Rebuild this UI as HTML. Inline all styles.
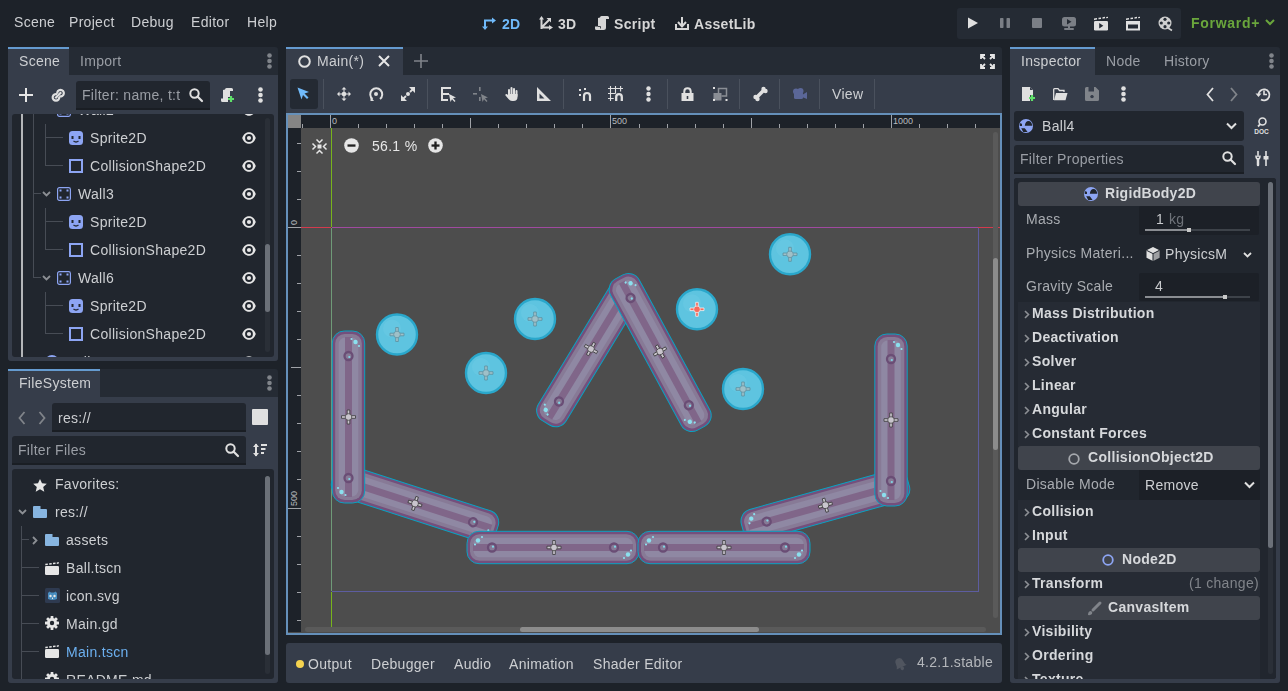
<!DOCTYPE html>
<html><head><meta charset="utf-8">
<style>
body{-webkit-font-smoothing:antialiased}
*{margin:0;padding:0;box-sizing:border-box}
html,body{width:1288px;height:691px;overflow:hidden;background:#1d2229;font-family:"Liberation Sans",sans-serif;}
.a{position:absolute}
.t{position:absolute;white-space:nowrap;font-size:14px;line-height:14px;color:#cdcfd2;letter-spacing:0.3px;will-change:transform}
.b{font-weight:bold}
.dim{color:#9a9ea5}
svg{position:absolute;overflow:visible}
</style></head><body>
<!-- MENU BAR -->
<div class="t" style="left:14px;top:15px">Scene</div>
<div class="t" style="left:69px;top:15px">Project</div>
<div class="t" style="left:131px;top:15px">Debug</div>
<div class="t" style="left:191px;top:15px">Editor</div>
<div class="t" style="left:247px;top:15px">Help</div>

<!-- play panel -->
<div class="a" style="left:957px;top:8px;width:224px;height:31px;background:#252b34;border-radius:3px"></div>


<!-- TOP CENTER BUTTONS -->
<svg style="left:482px;top:16px" width="14" height="14" viewBox="0 0 14 14"><path d="M3 13V4.5H11" fill="none" stroke="#70bafa" stroke-width="2"/><path d="M0 10.5L3 14L6 10.5Z M10 1.5L14 4.5L10 7.5Z" fill="#70bafa"/></svg>
<div class="t b" style="left:502px;top:17px;color:#70bafa">2D</div>
<svg style="left:539px;top:16px" width="14" height="14" viewBox="0 0 14 14"><path d="M2.5 13V2.5 M2.5 11.5H12 M3 11L11 3" fill="none" stroke="#d6d6d6" stroke-width="2"/><path d="M0 3.5L2.5 0L5 3.5Z M10 9L14 11.5L10 14Z M7.5 2H12V6.5Z" fill="#d6d6d6"/></svg>
<div class="t b" style="left:558px;top:17px;color:#d6d6d6">3D</div>
<svg style="left:595px;top:16px" width="14" height="14" viewBox="0 0 14 14"><path d="M5 1.5Q5 0 6.5 0H12.5Q14 0 14 1.5V3H11V11.5Q11 14 8.5 14H1.5Q0 14 0 12.5V10.5H3V2Z" fill="#d6d6d6"/><path d="M3 10.5H5.5V12.5" fill="none" stroke="#1d2229" stroke-width=".8"/></svg>
<div class="t b" style="left:614px;top:17px;color:#d6d6d6">Script</div>
<svg style="left:675px;top:16px" width="14" height="14" viewBox="0 0 14 14"><path d="M1 8V13H13V8" fill="none" stroke="#d6d6d6" stroke-width="2"/><path d="M7 1V9" stroke="#d6d6d6" stroke-width="2"/><path d="M3 6L7 10.5L11 6" fill="none" stroke="#d6d6d6" stroke-width="2"/></svg>
<div class="t b" style="left:694px;top:17px;color:#d6d6d6">AssetLib</div>

<!-- PLAY BUTTONS -->
<svg style="left:967px;top:17px" width="12" height="12" viewBox="0 0 12 12"><path d="M1 0.5L11 6L1 11.5Z" fill="#e0e0e0"/></svg>
<svg style="left:1000px;top:18px" width="10" height="10" viewBox="0 0 10 10"><rect x="0" y="0" width="3.5" height="10" rx=".7" fill="#7b7f86"/><rect x="6.5" y="0" width="3.5" height="10" rx=".7" fill="#7b7f86"/></svg>
<svg style="left:1032px;top:18px" width="10" height="10" viewBox="0 0 10 10"><rect x="0" y="0" width="10" height="10" rx="1" fill="#7b7f86"/></svg>
<svg style="left:1062px;top:17px" width="14" height="13" viewBox="0 0 14 13"><rect x="0" y="0" width="14" height="9.5" rx="2.5" fill="#7b7f86"/><path d="M5 2L9.5 4.8L5 7.5Z" fill="#252b34"/><rect x="6" y="9" width="2" height="2" fill="#7b7f86"/><rect x="2" y="11" width="10" height="2" rx="1" fill="#7b7f86"/></svg>
<svg style="left:1094px;top:17px" width="14" height="14" viewBox="0 0 14 14"><path d="M0 1.5L3 1 3 2.5 0 3Z M4.5 0.8L7 0.4 7 1.9 4.5 2.3Z M8.5 0.2L11 -0.2 11 1.3 8.5 1.7Z M12.2 0 L14 -0.2 14 1.1 12.2 1.3Z" fill="#e0e0e0"/><rect x="0" y="4" width="14" height="9.5" rx="1.3" fill="#e0e0e0"/><path d="M5.2 6L9.3 8.7L5.2 11.4Z" fill="#252b34"/></svg>
<svg style="left:1126px;top:17px" width="14" height="14" viewBox="0 0 14 14"><path d="M0 1.5L3 1 3 2.5 0 3Z M4.5 0.8L7 0.4 7 1.9 4.5 2.3Z M8.5 0.2L11 -0.2 11 1.3 8.5 1.7Z M12.2 0 L14 -0.2 14 1.1 12.2 1.3Z" fill="#e0e0e0"/><path d="M0 4H14V13.5H0Z M2 7.5V11.5H12V7.5Z" fill="#e0e0e0" fill-rule="evenodd"/></svg>
<svg style="left:1158px;top:16px" width="15" height="15" viewBox="0 0 15 15"><circle cx="7" cy="7" r="6.5" fill="#cfcfcf"/><circle cx="7" cy="3.3" r="1.6" fill="#252b34"/><circle cx="3.3" cy="7" r="1.6" fill="#252b34"/><circle cx="10.7" cy="7" r="1.6" fill="#252b34"/><circle cx="7" cy="10.7" r="1.6" fill="#252b34"/><path d="M10 12L14 14.5" stroke="#cfcfcf" stroke-width="1.6"/></svg>
<div class="t b" style="left:1191px;top:16px;color:#6aa63c;letter-spacing:0.7px">Forward+</div>
<svg style="left:1265px;top:19px" width="10" height="7" viewBox="0 0 10 7"><path d="M1 1L5 5L9 1" fill="none" stroke="#6aa63c" stroke-width="2"/></svg>

<!-- LEFT DOCK: SCENE -->
<div class="a" style="left:8px;top:47px;width:270px;height:314px;background:#252b34;border-radius:3px 3px 3px 3px"></div>
<div class="a" style="left:8px;top:75px;width:270px;height:286px;background:#363d4a;border-radius:0 0 3px 3px"></div>
<div class="a" style="left:8px;top:47px;width:61px;height:28px;background:#363d4a;border-top:2px solid #659bd0"></div>
<div class="a" style="left:12px;top:114px;width:262px;height:243px;background:#21262e;border-radius:3px"></div>

<div class="t" style="left:19px;top:54px">Scene</div>
<div class="t dim" style="left:80px;top:54px">Import</div>
<svg style="left:267px;top:53px" width="5" height="16" viewBox="0 0 5 16"><circle cx="2.5" cy="2.5" r="2.3" fill="#80848a"/><circle cx="2.5" cy="8" r="2.3" fill="#80848a"/><circle cx="2.5" cy="13.5" r="2.3" fill="#80848a"/></svg>
<svg style="left:19px;top:88px" width="14" height="14" viewBox="0 0 14 14"><path d="M7 0V14M0 7H14" stroke="#e6e6e6" stroke-width="2"/></svg>
<svg style="left:51px;top:88px" width="15" height="15" viewBox="0 0 15 15"><g fill="none" stroke="#e0e0e0" stroke-width="2.2"><path d="M6.2 6.3A3.3 3.3 0 1 0 8.2 8.7"/><path d="M8.3 8.2A3.3 3.3 0 1 0 6.3 5.8"/><path d="M4.3 10.2L10.2 4.3"/></g></svg>
<div class="a" style="left:76px;top:81px;width:134px;height:29px;background:#21262e;border-bottom:2px solid #1a1e24;border-radius:3px 3px 0 0"></div>
<div class="t dim" style="left:82px;top:88px">Filter: name, t:t</div>
<svg style="left:189px;top:88px" width="14" height="14" viewBox="0 0 14 14"><circle cx="5.5" cy="5.5" r="4.2" fill="none" stroke="#e0e0e0" stroke-width="2"/><path d="M8.5 8.5L13 13" stroke="#e0e0e0" stroke-width="2.2" stroke-linecap="round"/></svg>
<svg style="left:221px;top:88px" width="15" height="15" viewBox="0 0 15 15"><path d="M4 1.5Q4 0 5.5 0H10.5Q12 0 12 1.5V3H9V9H7V14H1.5Q0 14 0 12.5V10.5H2V2Z" fill="#e0e0e0"/><path d="M10 8V14M7 11H13" stroke="#5fe06a" stroke-width="2.2"/></svg>
<svg style="left:258px;top:87px" width="5" height="16" viewBox="0 0 5 16"><circle cx="2.5" cy="2.5" r="2.3" fill="#e0e0e0"/><circle cx="2.5" cy="8" r="2.3" fill="#e0e0e0"/><circle cx="2.5" cy="13.5" r="2.3" fill="#e0e0e0"/></svg>
<div class="a" style="left:21px;top:114px;width:2px;height:243px;background:#b4b6b9"></div>
<div class="a" style="left:33px;top:114px;width:1px;height:164px;background:#474c55"></div>
<div class="a" style="left:45px;top:124px;width:1px;height:42px;background:#474c55"></div>
<div class="a" style="left:45px;top:208px;width:1px;height:42px;background:#474c55"></div>
<div class="a" style="left:45px;top:292px;width:1px;height:42px;background:#474c55"></div>
<div class="a" style="left:45px;top:137px;width:18px;height:1px;background:#474c55"></div>
<div class="a" style="left:45px;top:165px;width:18px;height:1px;background:#474c55"></div>
<div class="a" style="left:45px;top:221px;width:18px;height:1px;background:#474c55"></div>
<div class="a" style="left:45px;top:249px;width:18px;height:1px;background:#474c55"></div>
<div class="a" style="left:45px;top:305px;width:18px;height:1px;background:#474c55"></div>
<div class="a" style="left:45px;top:333px;width:18px;height:1px;background:#474c55"></div>
<div class="a" style="left:33px;top:193px;width:8px;height:1px;background:#474c55"></div>
<div class="a" style="left:33px;top:277px;width:8px;height:1px;background:#474c55"></div>
<div class="a" style="left:12px;top:114px;width:262px;height:243px;overflow:hidden"><div class="a" style="left:-12px;top:-114px;width:300px;height:400px"><svg style="left:42px;top:107px" width="9" height="6" viewBox="0 0 9 6"><path d="M1 1L4.5 4.5L8 1" fill="none" stroke="#8c8f94" stroke-width="1.8"/></svg><svg style="left:57px;top:103px" width="14" height="14" viewBox="0 0 14 14"><rect x="0.6" y="0.6" width="12.8" height="12.8" rx="1.8" fill="none" stroke="#8da5f3" stroke-width="1.2"/><rect x="2.5" y="2.5" width="2" height="2" fill="#8da5f3"/><rect x="9.5" y="2.5" width="2" height="2" fill="#8da5f3"/><rect x="2.5" y="9.5" width="2" height="2" fill="#8da5f3"/><rect x="9.5" y="9.5" width="2" height="2" fill="#8da5f3"/></svg><div class="t" style="left:78px;top:103px">Wall2</div><svg style="left:242px;top:104px" width="14" height="12" viewBox="0 0 14 12"><path d="M0.2 6C1.8 1.8 4.3 0.2 7 0.2C9.7 0.2 12.2 1.8 13.8 6C12.2 10.2 9.7 11.8 7 11.8C4.3 11.8 1.8 10.2 0.2 6Z" fill="#e6e6e6"/><circle cx="7" cy="6" r="3.9" fill="#21262e"/><circle cx="7" cy="6" r="2.1" fill="#e6e6e6"/></svg><svg style="left:69px;top:131px" width="14" height="14" viewBox="0 0 14 14"><rect x="0" y="0" width="14" height="14" rx="3.5" fill="#8da5f3"/><rect x="2.5" y="5" width="2" height="3" fill="#21262e"/><rect x="9.5" y="5" width="2" height="3" fill="#21262e"/><path d="M4.5 10Q7 12 9.5 10" fill="none" stroke="#21262e" stroke-width="1.3"/></svg><div class="t" style="left:90px;top:131px">Sprite2D</div><svg style="left:242px;top:132px" width="14" height="12" viewBox="0 0 14 12"><path d="M0.2 6C1.8 1.8 4.3 0.2 7 0.2C9.7 0.2 12.2 1.8 13.8 6C12.2 10.2 9.7 11.8 7 11.8C4.3 11.8 1.8 10.2 0.2 6Z" fill="#e6e6e6"/><circle cx="7" cy="6" r="3.9" fill="#21262e"/><circle cx="7" cy="6" r="2.1" fill="#e6e6e6"/></svg><svg style="left:69px;top:159px" width="14" height="14" viewBox="0 0 14 14"><rect x="1" y="1" width="12" height="12" fill="none" stroke="#8da5f3" stroke-width="2"/></svg><div class="t" style="left:90px;top:159px">CollisionShape2D</div><svg style="left:242px;top:160px" width="14" height="12" viewBox="0 0 14 12"><path d="M0.2 6C1.8 1.8 4.3 0.2 7 0.2C9.7 0.2 12.2 1.8 13.8 6C12.2 10.2 9.7 11.8 7 11.8C4.3 11.8 1.8 10.2 0.2 6Z" fill="#e6e6e6"/><circle cx="7" cy="6" r="3.9" fill="#21262e"/><circle cx="7" cy="6" r="2.1" fill="#e6e6e6"/></svg><svg style="left:42px;top:191px" width="9" height="6" viewBox="0 0 9 6"><path d="M1 1L4.5 4.5L8 1" fill="none" stroke="#8c8f94" stroke-width="1.8"/></svg><svg style="left:57px;top:187px" width="14" height="14" viewBox="0 0 14 14"><rect x="0.6" y="0.6" width="12.8" height="12.8" rx="1.8" fill="none" stroke="#8da5f3" stroke-width="1.2"/><rect x="2.5" y="2.5" width="2" height="2" fill="#8da5f3"/><rect x="9.5" y="2.5" width="2" height="2" fill="#8da5f3"/><rect x="2.5" y="9.5" width="2" height="2" fill="#8da5f3"/><rect x="9.5" y="9.5" width="2" height="2" fill="#8da5f3"/></svg><div class="t" style="left:78px;top:187px">Wall3</div><svg style="left:242px;top:188px" width="14" height="12" viewBox="0 0 14 12"><path d="M0.2 6C1.8 1.8 4.3 0.2 7 0.2C9.7 0.2 12.2 1.8 13.8 6C12.2 10.2 9.7 11.8 7 11.8C4.3 11.8 1.8 10.2 0.2 6Z" fill="#e6e6e6"/><circle cx="7" cy="6" r="3.9" fill="#21262e"/><circle cx="7" cy="6" r="2.1" fill="#e6e6e6"/></svg><svg style="left:69px;top:215px" width="14" height="14" viewBox="0 0 14 14"><rect x="0" y="0" width="14" height="14" rx="3.5" fill="#8da5f3"/><rect x="2.5" y="5" width="2" height="3" fill="#21262e"/><rect x="9.5" y="5" width="2" height="3" fill="#21262e"/><path d="M4.5 10Q7 12 9.5 10" fill="none" stroke="#21262e" stroke-width="1.3"/></svg><div class="t" style="left:90px;top:215px">Sprite2D</div><svg style="left:242px;top:216px" width="14" height="12" viewBox="0 0 14 12"><path d="M0.2 6C1.8 1.8 4.3 0.2 7 0.2C9.7 0.2 12.2 1.8 13.8 6C12.2 10.2 9.7 11.8 7 11.8C4.3 11.8 1.8 10.2 0.2 6Z" fill="#e6e6e6"/><circle cx="7" cy="6" r="3.9" fill="#21262e"/><circle cx="7" cy="6" r="2.1" fill="#e6e6e6"/></svg><svg style="left:69px;top:243px" width="14" height="14" viewBox="0 0 14 14"><rect x="1" y="1" width="12" height="12" fill="none" stroke="#8da5f3" stroke-width="2"/></svg><div class="t" style="left:90px;top:243px">CollisionShape2D</div><svg style="left:242px;top:244px" width="14" height="12" viewBox="0 0 14 12"><path d="M0.2 6C1.8 1.8 4.3 0.2 7 0.2C9.7 0.2 12.2 1.8 13.8 6C12.2 10.2 9.7 11.8 7 11.8C4.3 11.8 1.8 10.2 0.2 6Z" fill="#e6e6e6"/><circle cx="7" cy="6" r="3.9" fill="#21262e"/><circle cx="7" cy="6" r="2.1" fill="#e6e6e6"/></svg><svg style="left:42px;top:275px" width="9" height="6" viewBox="0 0 9 6"><path d="M1 1L4.5 4.5L8 1" fill="none" stroke="#8c8f94" stroke-width="1.8"/></svg><svg style="left:57px;top:271px" width="14" height="14" viewBox="0 0 14 14"><rect x="0.6" y="0.6" width="12.8" height="12.8" rx="1.8" fill="none" stroke="#8da5f3" stroke-width="1.2"/><rect x="2.5" y="2.5" width="2" height="2" fill="#8da5f3"/><rect x="9.5" y="2.5" width="2" height="2" fill="#8da5f3"/><rect x="2.5" y="9.5" width="2" height="2" fill="#8da5f3"/><rect x="9.5" y="9.5" width="2" height="2" fill="#8da5f3"/></svg><div class="t" style="left:78px;top:271px">Wall6</div><svg style="left:242px;top:272px" width="14" height="12" viewBox="0 0 14 12"><path d="M0.2 6C1.8 1.8 4.3 0.2 7 0.2C9.7 0.2 12.2 1.8 13.8 6C12.2 10.2 9.7 11.8 7 11.8C4.3 11.8 1.8 10.2 0.2 6Z" fill="#e6e6e6"/><circle cx="7" cy="6" r="3.9" fill="#21262e"/><circle cx="7" cy="6" r="2.1" fill="#e6e6e6"/></svg><svg style="left:69px;top:299px" width="14" height="14" viewBox="0 0 14 14"><rect x="0" y="0" width="14" height="14" rx="3.5" fill="#8da5f3"/><rect x="2.5" y="5" width="2" height="3" fill="#21262e"/><rect x="9.5" y="5" width="2" height="3" fill="#21262e"/><path d="M4.5 10Q7 12 9.5 10" fill="none" stroke="#21262e" stroke-width="1.3"/></svg><div class="t" style="left:90px;top:299px">Sprite2D</div><svg style="left:242px;top:300px" width="14" height="12" viewBox="0 0 14 12"><path d="M0.2 6C1.8 1.8 4.3 0.2 7 0.2C9.7 0.2 12.2 1.8 13.8 6C12.2 10.2 9.7 11.8 7 11.8C4.3 11.8 1.8 10.2 0.2 6Z" fill="#e6e6e6"/><circle cx="7" cy="6" r="3.9" fill="#21262e"/><circle cx="7" cy="6" r="2.1" fill="#e6e6e6"/></svg><svg style="left:69px;top:327px" width="14" height="14" viewBox="0 0 14 14"><rect x="1" y="1" width="12" height="12" fill="none" stroke="#8da5f3" stroke-width="2"/></svg><div class="t" style="left:90px;top:327px">CollisionShape2D</div><svg style="left:242px;top:328px" width="14" height="12" viewBox="0 0 14 12"><path d="M0.2 6C1.8 1.8 4.3 0.2 7 0.2C9.7 0.2 12.2 1.8 13.8 6C12.2 10.2 9.7 11.8 7 11.8C4.3 11.8 1.8 10.2 0.2 6Z" fill="#e6e6e6"/><circle cx="7" cy="6" r="3.9" fill="#21262e"/><circle cx="7" cy="6" r="2.1" fill="#e6e6e6"/></svg><svg style="left:45px;top:355px" width="14" height="14" viewBox="0 0 14 14"><circle cx="7" cy="7" r="7" fill="#8da5f3"/></svg><div class="t" style="left:66px;top:355px">Ball</div><svg style="left:242px;top:356px" width="14" height="12" viewBox="0 0 14 12"><path d="M0.2 6C1.8 1.8 4.3 0.2 7 0.2C9.7 0.2 12.2 1.8 13.8 6C12.2 10.2 9.7 11.8 7 11.8C4.3 11.8 1.8 10.2 0.2 6Z" fill="#e6e6e6"/><circle cx="7" cy="6" r="3.9" fill="#21262e"/><circle cx="7" cy="6" r="2.1" fill="#e6e6e6"/></svg></div></div>
<div class="a" style="left:265px;top:118px;width:5px;height:234px;background:#2a2f37;border-radius:3px"></div>
<div class="a" style="left:265px;top:244px;width:5px;height:68px;background:#6b7078;border-radius:3px"></div>
<!-- LEFT DOCK: FILESYSTEM -->
<div class="a" style="left:8px;top:369px;width:270px;height:314px;background:#252b34;border-radius:3px"></div>
<div class="a" style="left:8px;top:397px;width:270px;height:286px;background:#363d4a;border-radius:0 0 3px 3px"></div>
<div class="a" style="left:8px;top:369px;width:92px;height:28px;background:#363d4a;border-top:2px solid #659bd0"></div>
<div class="a" style="left:12px;top:469px;width:262px;height:210px;background:#21262e;border-radius:3px"></div>

<div class="t" style="left:19px;top:376px">FileSystem</div>
<svg style="left:267px;top:375px" width="5" height="16" viewBox="0 0 5 16"><circle cx="2.5" cy="2.5" r="2.3" fill="#80848a"/><circle cx="2.5" cy="8" r="2.3" fill="#80848a"/><circle cx="2.5" cy="13.5" r="2.3" fill="#80848a"/></svg>
<svg style="left:18px;top:411px" width="8" height="14" viewBox="0 0 8 14"><path d="M6.5 1L1.5 7L6.5 13" fill="none" stroke="#80848a" stroke-width="1.8"/></svg>
<svg style="left:38px;top:411px" width="8" height="14" viewBox="0 0 8 14"><path d="M1.5 1L6.5 7L1.5 13" fill="none" stroke="#80848a" stroke-width="1.8"/></svg>
<div class="a" style="left:52px;top:403px;width:194px;height:29px;background:#21262e;border-bottom:2px solid #1a1e24;border-radius:3px 3px 0 0"></div>
<div class="t" style="left:58px;top:411px">res://</div>
<div class="a" style="left:252px;top:409px;width:16px;height:16px;background:#e0e0e0;border-radius:1px"></div>
<div class="a" style="left:12px;top:436px;width:234px;height:29px;background:#21262e;border-bottom:2px solid #1a1e24;border-radius:3px 3px 0 0"></div>
<div class="t dim" style="left:18px;top:443px">Filter Files</div>
<svg style="left:225px;top:443px" width="14" height="14" viewBox="0 0 14 14"><circle cx="5.5" cy="5.5" r="4.2" fill="none" stroke="#e0e0e0" stroke-width="2"/><path d="M8.5 8.5L13 13" stroke="#e0e0e0" stroke-width="2.2" stroke-linecap="round"/></svg>
<svg style="left:253px;top:443px" width="14" height="14" viewBox="0 0 14 14"><path d="M3 1V13" stroke="#e0e0e0" stroke-width="2"/><path d="M0 4L3 0.5L6 4Z M0 10L3 13.5L6 10Z" fill="#e0e0e0"/><path d="M8 2H14M8 6H12.5M8 10H11" stroke="#e0e0e0" stroke-width="1.8"/></svg>
<div class="a" style="left:12px;top:469px;width:262px;height:210px;overflow:hidden"><div class="a" style="left:-12px;top:-469px;width:300px;height:800px"><svg style="left:33px;top:479px" width="14" height="13" viewBox="0 0 14 13"><path d="M7 0L9 4.3L13.8 4.8L10.2 8L11.3 12.8L7 10.3L2.7 12.8L3.8 8L0.2 4.8L5 4.3Z" fill="#e6e6e6"/></svg><div class="t" style="left:55px;top:477px">Favorites:</div><svg style="left:18px;top:509px" width="9" height="6" viewBox="0 0 9 6"><path d="M1 1L4.5 4.5L8 1" fill="none" stroke="#8c8f94" stroke-width="1.8"/></svg><svg style="left:33px;top:506px" width="14" height="12" viewBox="0 0 14 12"><path d="M0 1Q0 0 1 0H7.5V3H13Q14 3 14 4V11Q14 12 13 12H1Q0 12 0 11Z" fill="#87b5e0"/></svg><div class="t" style="left:55px;top:505px">res://</div><div class="a" style="left:21px;top:526px;width:1px;height:160px;background:#474c55"></div><div class="a" style="left:21px;top:539px;width:8px;height:1px;background:#474c55"></div><div class="a" style="left:21px;top:567px;width:18px;height:1px;background:#474c55"></div><div class="a" style="left:21px;top:595px;width:18px;height:1px;background:#474c55"></div><div class="a" style="left:21px;top:623px;width:18px;height:1px;background:#474c55"></div><div class="a" style="left:21px;top:651px;width:18px;height:1px;background:#474c55"></div><div class="a" style="left:21px;top:679px;width:18px;height:1px;background:#474c55"></div><svg style="left:32px;top:536px" width="6" height="9" viewBox="0 0 6 9"><path d="M1 1L4.5 4.5L1 8" fill="none" stroke="#8c8f94" stroke-width="1.8"/></svg><svg style="left:45px;top:534px" width="14" height="12" viewBox="0 0 14 12"><path d="M0 1Q0 0 1 0H7.5V3H13Q14 3 14 4V11Q14 12 13 12H1Q0 12 0 11Z" fill="#87b5e0"/></svg><div class="t" style="left:66px;top:533px">assets</div><svg style="left:45px;top:562px" width="14" height="13" viewBox="0 0 14 13"><path d="M0.3 1.8L2.8 1.5V3L0.3 3.3Z M4.2 1.3L6.7 1V2.5L4.2 2.8Z M8 0.8L10.5 0.5V2L8 2.3Z M11.8 0.4L13.8 0.1V1.6L11.8 1.9Z" fill="#e6e6e6"/><rect x="0" y="4" width="14" height="9" rx="1.2" fill="#e6e6e6"/></svg><div class="t" style="left:66px;top:561px">Ball.tscn</div><svg style="left:45px;top:588px" width="15" height="15" viewBox="0 0 15 15"><rect x="0" y="0" width="15" height="15" rx="1.5" fill="#2e3a50"/><path d="M3 5L4.5 3.5L6 4.5H9L10.5 3.5L12 5V11Q7.5 13 3 11Z" fill="#478cbf"/><circle cx="5.5" cy="8" r="1.2" fill="#e6e6e6"/><circle cx="9.5" cy="8" r="1.2" fill="#e6e6e6"/><rect x="7" y="9.5" width="1" height="1.5" fill="#e6e6e6"/></svg><div class="t" style="left:66px;top:589px">icon.svg</div><svg style="left:45px;top:616px" width="14" height="14" viewBox="0 0 14 14"><g fill="#e6e6e6"><circle cx="7" cy="7" r="5"/><rect x="5.6" y="0" width="2.8" height="14" rx=".5"/><rect x="0" y="5.6" width="14" height="2.8" rx=".5"/><rect x="5.6" y="0" width="2.8" height="14" rx=".5" transform="rotate(45 7 7)"/><rect x="5.6" y="0" width="2.8" height="14" rx=".5" transform="rotate(-45 7 7)"/></g><circle cx="7" cy="7" r="2.2" fill="#21262e"/></svg><div class="t" style="left:66px;top:617px">Main.gd</div><svg style="left:45px;top:645px" width="14" height="13" viewBox="0 0 14 13"><path d="M0.3 1.8L2.8 1.5V3L0.3 3.3Z M4.2 1.3L6.7 1V2.5L4.2 2.8Z M8 0.8L10.5 0.5V2L8 2.3Z M11.8 0.4L13.8 0.1V1.6L11.8 1.9Z" fill="#e6e6e6"/><rect x="0" y="4" width="14" height="9" rx="1.2" fill="#e6e6e6"/></svg><div class="t" style="left:66px;top:645px;color:#6cb0f0">Main.tscn</div><svg style="left:45px;top:672px" width="14" height="14" viewBox="0 0 14 14"><g fill="#e6e6e6"><circle cx="7" cy="7" r="5"/><rect x="5.6" y="0" width="2.8" height="14" rx=".5"/><rect x="0" y="5.6" width="14" height="2.8" rx=".5"/><rect x="5.6" y="0" width="2.8" height="14" rx=".5" transform="rotate(45 7 7)"/><rect x="5.6" y="0" width="2.8" height="14" rx=".5" transform="rotate(-45 7 7)"/></g><circle cx="7" cy="7" r="2.2" fill="#21262e"/></svg><div class="t" style="left:66px;top:673px">README.md</div></div></div>
<div class="a" style="left:265px;top:476px;width:5px;height:198px;background:#2a2f37;border-radius:3px"></div>
<div class="a" style="left:265px;top:476px;width:5px;height:179px;background:#6b7078;border-radius:3px"></div>
<!-- CENTER -->
<div class="a" style="left:286px;top:47px;width:716px;height:28px;background:#252b34;border-radius:3px 3px 0 0"></div>
<div class="a" style="left:286px;top:75px;width:716px;height:560px;background:#363d4a"></div>
<div class="a" style="left:286px;top:47px;width:117px;height:28px;background:#363d4a;border-top:2px solid #659bd0"></div>
<div class="a" style="left:286px;top:113px;width:716px;height:522px;border:2px solid #6590ba;background:#4c4c4c"></div>
<div class="a" style="left:286px;top:643px;width:716px;height:40px;background:#363d4a;border-radius:3px"></div>

<!-- RIGHT DOCK -->
<div class="a" style="left:1010px;top:47px;width:270px;height:636px;background:#252b34;border-radius:3px"></div>
<div class="a" style="left:1010px;top:75px;width:270px;height:608px;background:#363d4a;border-radius:0 0 3px 3px"></div>
<div class="a" style="left:1010px;top:47px;width:85px;height:28px;background:#363d4a;border-top:2px solid #659bd0"></div>
<div class="a" style="left:1014px;top:178px;width:262px;height:501px;background:#21262e;border-radius:3px"></div>

<svg style="left:298px;top:55px" width="13" height="13" viewBox="0 0 13 13"><circle cx="6.5" cy="6.5" r="5.3" fill="none" stroke="#e0e0e0" stroke-width="2"/></svg>
<div class="t" style="left:317px;top:54px">Main(*)</div>
<svg style="left:378px;top:55px" width="12" height="12" viewBox="0 0 12 12"><path d="M1 1L11 11M11 1L1 11" stroke="#e6e6e6" stroke-width="2"/></svg>
<svg style="left:414px;top:54px" width="14" height="14" viewBox="0 0 14 14"><path d="M7 0V14M0 7H14" stroke="#80848a" stroke-width="1.6"/></svg>
<svg style="left:980px;top:54px" width="15" height="15" viewBox="0 0 15 15"><g fill="none" stroke="#e6e6e6" stroke-width="1.8"><path d="M1 5V1H5M1 1L5 5"/><path d="M10 1H14V5M14 1L10 5"/><path d="M1 10V14H5M1 14L5 10"/><path d="M14 10V14H10M14 14L10 10"/></g></svg>
<div class="a" style="left:290px;top:79px;width:28px;height:30px;background:#242a33;border-radius:3px"></div>
<svg style="left:297px;top:87px" width="13" height="13" viewBox="0 0 13 13"><path d="M0.5 0.5L12 5L7.5 6.5L11.5 10.5L10 12L6 8L4.5 12.5Z" fill="#70bafa"/></svg>
<div class="a" style="left:323px;top:79px;width:1px;height:30px;background:#4a515d"></div>
<div class="a" style="left:427px;top:79px;width:1px;height:30px;background:#4a515d"></div>
<div class="a" style="left:563px;top:79px;width:1px;height:30px;background:#4a515d"></div>
<div class="a" style="left:667px;top:79px;width:1px;height:30px;background:#4a515d"></div>
<div class="a" style="left:739px;top:79px;width:1px;height:30px;background:#4a515d"></div>
<div class="a" style="left:779px;top:79px;width:1px;height:30px;background:#4a515d"></div>
<div class="a" style="left:819px;top:79px;width:1px;height:30px;background:#4a515d"></div>
<div class="a" style="left:874px;top:79px;width:1px;height:30px;background:#4a515d"></div>
<svg style="left:337px;top:87px" width="14" height="14" viewBox="0 0 14 14"><g fill="#e0e0e0"><circle cx="7" cy="7" r="2.3"/><path d="M4.5 2.5L7 0L9.5 2.5Z M4.5 11.5L7 14L9.5 11.5Z M2.5 4.5L0 7L2.5 9.5Z M11.5 4.5L14 7L11.5 9.5Z"/></g><path d="M7 2V12M2 7H12" stroke="#e0e0e0" stroke-width="1"/></svg>
<svg style="left:369px;top:87px" width="14" height="14" viewBox="0 0 14 14"><path d="M3.5 12A6 6 0 1 1 11 12" fill="none" stroke="#e0e0e0" stroke-width="2"/><circle cx="7" cy="7" r="2" fill="#e0e0e0"/><path d="M1.5 9.5L5 14H1.5Z" fill="#e0e0e0"/></svg>
<svg style="left:401px;top:87px" width="14" height="14" viewBox="0 0 14 14"><g fill="#e0e0e0"><path d="M8 0H14V6Z M0 8V14H6Z"/><circle cx="7" cy="7" r="2"/></g><path d="M2 12L5 9M9 5L12 2" stroke="#e0e0e0" stroke-width="1.8"/></svg>
<svg style="left:441px;top:87px" width="15" height="15" viewBox="0 0 15 15"><g fill="#e0e0e0"><rect x="0" y="0" width="2" height="14"/><rect x="0" y="0" width="10" height="2"/><rect x="0" y="6" width="8" height="2"/><rect x="0" y="12" width="7" height="2"/><path d="M8 7L15 10.5L12 11.3L14.5 14L13.5 15L11 12.3L9.5 15Z"/></g></svg>
<svg style="left:473px;top:87px" width="15" height="15" viewBox="0 0 15 15"><g fill="#80848a"><rect x="6" y="0" width="1.6" height="4"/><rect x="0" y="6" width="4" height="1.6"/><rect x="6" y="10" width="1.6" height="4"/><path d="M8 7L15 10.5L12 11.3L14.5 14L13.5 15L11 12.3L9.5 15Z"/></g></svg>
<svg style="left:505px;top:87px" width="14" height="14" viewBox="0 0 14 14"><g fill="#e0e0e0"><rect x="3" y="2" width="2" height="7" rx="1"/><rect x="5.5" y="0" width="2" height="8" rx="1"/><rect x="8" y="1" width="2" height="8" rx="1"/><rect x="10.5" y="3" width="2" height="7" rx="1"/><path d="M3 7H12.5V10Q12.5 14 8.5 14H7Q5 14 3.5 12L0.5 8.5Q0 7.5 1 7Q2 6.7 3 8Z"/></g></svg>
<svg style="left:537px;top:87px" width="14" height="14" viewBox="0 0 14 14"><path d="M0 0V14H14Z M2.5 6.5V11.5H7.5Z" fill="#e0e0e0" fill-rule="evenodd"/></svg>
<svg style="left:579px;top:88px" width="13" height="13" viewBox="0 0 13 13"><g fill="#e0e0e0"><rect x="0" y="1" width="2" height="2"/><rect x="5" y="0" width="2" height="2"/><rect x="0" y="6" width="2" height="2"/></g><path d="M5 13V8Q5 5 8 5Q11 5 11 8V13" fill="none" stroke="#e0e0e0" stroke-width="2.2"/></svg>
<svg style="left:608px;top:86px" width="16" height="15" viewBox="0 0 16 15"><path d="M2.5 0V15M7.5 0V7.5M12.6 0V5.6M0 2.5H15M0 7.5H7.5M0 12.5H5.7" stroke="#e0e0e0" stroke-width="1.1"/><path d="M8.2 15V11Q8.2 8.2 11 8.2Q13.8 8.2 13.8 11V15" fill="none" stroke="#e0e0e0" stroke-width="2.3"/></svg>
<svg style="left:646px;top:86px" width="5" height="16" viewBox="0 0 5 16"><circle cx="2.5" cy="2.5" r="2.2" fill="#e0e0e0"/><circle cx="2.5" cy="8" r="2.2" fill="#e0e0e0"/><circle cx="2.5" cy="13.5" r="2.2" fill="#e0e0e0"/></svg>
<svg style="left:681px;top:87px" width="13" height="14" viewBox="0 0 13 14"><path d="M3.3 6.5V4.5Q3.3 1.2 6.5 1.2Q9.7 1.2 9.7 4.5V6.5" fill="none" stroke="#e0e0e0" stroke-width="2"/><path d="M0.5 6H12.5V14H0.5Z M5.7 9V12H7.3V9Z" fill="#e0e0e0" fill-rule="evenodd"/></svg>
<svg style="left:713px;top:87px" width="15" height="14" viewBox="0 0 15 14"><rect x="0.5" y="6" width="8" height="7.5" fill="#8a8e95"/><path d="M5.5 7V1.5H13.5V9H8.5" fill="none" stroke="#8a8e95" stroke-width="1.5"/><g fill="#e0e0e0"><rect x="0" y="0" width="2" height="2"/><rect x="12.5" y="12" width="2" height="2"/><rect x="0" y="12" width="2" height="2"/></g></svg>
<svg style="left:753px;top:87px" width="15" height="14" viewBox="0 0 15 14"><path d="M4 10L11 3" stroke="#e0e0e0" stroke-width="3.5"/><g fill="#e0e0e0"><circle cx="2.5" cy="10" r="2.2"/><circle cx="4.5" cy="12" r="2.2"/><circle cx="10.5" cy="2" r="2.2"/><circle cx="12.5" cy="4" r="2.2"/></g></svg>
<svg style="left:793px;top:88px" width="14" height="12" viewBox="0 0 14 12"><g fill="#5b6798"><circle cx="3" cy="3.5" r="3"/><circle cx="7.5" cy="3" r="3"/><rect x="1" y="4" width="9" height="7" rx="1.5"/><path d="M9 7L14 4V11L9 9Z"/></g></svg>
<div class="t" style="left:832px;top:87px">View</div>
<div class="a" style="left:288px;top:115px;width:712px;height:13px;background:#1d2229"></div>
<div class="a" style="left:288px;top:128px;width:13px;height:504px;background:#1d2229"></div>
<div class="a" style="left:288px;top:115px;width:13px;height:13px;background:#858585"></div>
<div class="a" style="left:302px;top:124px;width:1px;height:4px;background:#a0a3a8"></div>
<div class="a" style="left:330px;top:115px;width:1px;height:13px;background:#a0a3a8"></div>
<div class="a" style="left:332px;top:116px;font-size:9px;line-height:10px;color:#b8bbbf;white-space:nowrap">0</div>
<div class="a" style="left:358px;top:124px;width:1px;height:4px;background:#a0a3a8"></div>
<div class="a" style="left:386px;top:124px;width:1px;height:4px;background:#a0a3a8"></div>
<div class="a" style="left:414px;top:124px;width:1px;height:4px;background:#a0a3a8"></div>
<div class="a" style="left:442px;top:124px;width:1px;height:4px;background:#a0a3a8"></div>
<div class="a" style="left:470px;top:118px;width:1px;height:10px;background:#a0a3a8"></div>
<div class="a" style="left:498px;top:124px;width:1px;height:4px;background:#a0a3a8"></div>
<div class="a" style="left:526px;top:124px;width:1px;height:4px;background:#a0a3a8"></div>
<div class="a" style="left:554px;top:124px;width:1px;height:4px;background:#a0a3a8"></div>
<div class="a" style="left:582px;top:124px;width:1px;height:4px;background:#a0a3a8"></div>
<div class="a" style="left:610px;top:115px;width:1px;height:13px;background:#a0a3a8"></div>
<div class="a" style="left:612px;top:116px;font-size:9px;line-height:10px;color:#b8bbbf;white-space:nowrap">500</div>
<div class="a" style="left:639px;top:124px;width:1px;height:4px;background:#a0a3a8"></div>
<div class="a" style="left:667px;top:124px;width:1px;height:4px;background:#a0a3a8"></div>
<div class="a" style="left:695px;top:124px;width:1px;height:4px;background:#a0a3a8"></div>
<div class="a" style="left:723px;top:124px;width:1px;height:4px;background:#a0a3a8"></div>
<div class="a" style="left:751px;top:118px;width:1px;height:10px;background:#a0a3a8"></div>
<div class="a" style="left:779px;top:124px;width:1px;height:4px;background:#a0a3a8"></div>
<div class="a" style="left:807px;top:124px;width:1px;height:4px;background:#a0a3a8"></div>
<div class="a" style="left:835px;top:124px;width:1px;height:4px;background:#a0a3a8"></div>
<div class="a" style="left:863px;top:124px;width:1px;height:4px;background:#a0a3a8"></div>
<div class="a" style="left:891px;top:115px;width:1px;height:13px;background:#a0a3a8"></div>
<div class="a" style="left:893px;top:116px;font-size:9px;line-height:10px;color:#b8bbbf;white-space:nowrap">1000</div>
<div class="a" style="left:919px;top:124px;width:1px;height:4px;background:#a0a3a8"></div>
<div class="a" style="left:947px;top:124px;width:1px;height:4px;background:#a0a3a8"></div>
<div class="a" style="left:975px;top:124px;width:1px;height:4px;background:#a0a3a8"></div>
<div class="a" style="left:297px;top:143px;width:4px;height:1px;background:#a0a3a8"></div>
<div class="a" style="left:297px;top:171px;width:4px;height:1px;background:#a0a3a8"></div>
<div class="a" style="left:297px;top:199px;width:4px;height:1px;background:#a0a3a8"></div>
<div class="a" style="left:288px;top:227px;width:13px;height:1px;background:#a0a3a8"></div>
<div class="a" style="left:289px;top:225px;font-size:9px;line-height:10px;color:#b8bbbf;white-space:nowrap;transform:rotate(-90deg);transform-origin:0 0">0</div>
<div class="a" style="left:297px;top:255px;width:4px;height:1px;background:#a0a3a8"></div>
<div class="a" style="left:297px;top:283px;width:4px;height:1px;background:#a0a3a8"></div>
<div class="a" style="left:297px;top:311px;width:4px;height:1px;background:#a0a3a8"></div>
<div class="a" style="left:297px;top:339px;width:4px;height:1px;background:#a0a3a8"></div>
<div class="a" style="left:291px;top:367px;width:10px;height:1px;background:#a0a3a8"></div>
<div class="a" style="left:297px;top:395px;width:4px;height:1px;background:#a0a3a8"></div>
<div class="a" style="left:297px;top:423px;width:4px;height:1px;background:#a0a3a8"></div>
<div class="a" style="left:297px;top:451px;width:4px;height:1px;background:#a0a3a8"></div>
<div class="a" style="left:297px;top:479px;width:4px;height:1px;background:#a0a3a8"></div>
<div class="a" style="left:288px;top:508px;width:13px;height:1px;background:#a0a3a8"></div>
<div class="a" style="left:289px;top:506px;font-size:9px;line-height:10px;color:#b8bbbf;white-space:nowrap;transform:rotate(-90deg);transform-origin:0 0">500</div>
<div class="a" style="left:297px;top:536px;width:4px;height:1px;background:#a0a3a8"></div>
<div class="a" style="left:297px;top:564px;width:4px;height:1px;background:#a0a3a8"></div>
<div class="a" style="left:297px;top:592px;width:4px;height:1px;background:#a0a3a8"></div>
<div class="a" style="left:297px;top:620px;width:4px;height:1px;background:#a0a3a8"></div>
<svg style="left:301px;top:128px" width="699" height="504" viewBox="301 128 699 504"><rect x="301" y="128" width="699" height="504" fill="#4d4d4d"/><g shape-rendering="crispEdges"><rect x="301" y="227" width="30" height="1" fill="#d43a4e"/><rect x="332" y="227" width="646" height="1" fill="#a04aa0"/><rect x="978" y="227" width="22" height="1" fill="#d43a4e"/><rect x="331" y="128" width="1" height="99" fill="#78b41c"/><rect x="331" y="228" width="1" height="363" fill="#6f9a78"/><rect x="331" y="592" width="1" height="40" fill="#78b41c"/><rect x="978" y="228" width="1" height="363" fill="#5d5da0"/><rect x="332" y="591" width="647" height="1" fill="#5d5da0"/></g><g transform="translate(415 503.5) rotate(17.9)"><rect x="-86" y="-16.2" width="172" height="32.4" rx="12" fill="#744f7c" stroke="#0aa3c2" stroke-width="1"/><rect x="-83" y="-13.3" width="166" height="26.6" rx="9.5" fill="#877a96"/><rect x="-79.5" y="-9.8" width="159" height="19.6" rx="6.5" fill="#8f88a3"/><rect x="-80" y="-3.5" width="160" height="7" fill="#806689"/><circle cx="-61" cy="0" r="4" fill="#877a96" stroke="#6a4d75" stroke-width="2.3"/><circle cx="-60" cy="-0.8" r="1.1" fill="#7fd8e8"/><circle cx="61" cy="0" r="4" fill="#877a96" stroke="#6a4d75" stroke-width="2.3"/><circle cx="62" cy="-0.8" r="1.1" fill="#7fd8e8"/><circle cx="-75" cy="-7" r="2.2" fill="#8be0ee"/><circle cx="-71" cy="-10.5" r="1.1" fill="#8be0ee"/><circle cx="-78" cy="-3" r="1.1" fill="#8be0ee"/><circle cx="75" cy="7" r="2.2" fill="#8be0ee"/><circle cx="71" cy="10.5" r="1.1" fill="#8be0ee"/><circle cx="78" cy="3" r="1.1" fill="#8be0ee"/></g><g transform="translate(825.4 505.2) rotate(-15.6)"><rect x="-86" y="-16.2" width="172" height="32.4" rx="12" fill="#744f7c" stroke="#0aa3c2" stroke-width="1"/><rect x="-83" y="-13.3" width="166" height="26.6" rx="9.5" fill="#877a96"/><rect x="-79.5" y="-9.8" width="159" height="19.6" rx="6.5" fill="#8f88a3"/><rect x="-80" y="-3.5" width="160" height="7" fill="#806689"/><circle cx="-61" cy="0" r="4" fill="#877a96" stroke="#6a4d75" stroke-width="2.3"/><circle cx="-60" cy="-0.8" r="1.1" fill="#7fd8e8"/><circle cx="61" cy="0" r="4" fill="#877a96" stroke="#6a4d75" stroke-width="2.3"/><circle cx="62" cy="-0.8" r="1.1" fill="#7fd8e8"/><circle cx="-75" cy="-7" r="2.2" fill="#8be0ee"/><circle cx="-71" cy="-10.5" r="1.1" fill="#8be0ee"/><circle cx="-78" cy="-3" r="1.1" fill="#8be0ee"/><circle cx="75" cy="7" r="2.2" fill="#8be0ee"/><circle cx="71" cy="10.5" r="1.1" fill="#8be0ee"/><circle cx="78" cy="3" r="1.1" fill="#8be0ee"/></g><g transform="translate(348.5 417) rotate(90)"><rect x="-86" y="-16.2" width="172" height="32.4" rx="12" fill="#744f7c" stroke="#0aa3c2" stroke-width="1"/><rect x="-83" y="-13.3" width="166" height="26.6" rx="9.5" fill="#877a96"/><rect x="-79.5" y="-9.8" width="159" height="19.6" rx="6.5" fill="#8f88a3"/><rect x="-80" y="-3.5" width="160" height="7" fill="#806689"/><circle cx="-61" cy="0" r="4" fill="#877a96" stroke="#6a4d75" stroke-width="2.3"/><circle cx="-60" cy="-0.8" r="1.1" fill="#7fd8e8"/><circle cx="61" cy="0" r="4" fill="#877a96" stroke="#6a4d75" stroke-width="2.3"/><circle cx="62" cy="-0.8" r="1.1" fill="#7fd8e8"/><circle cx="-75" cy="-7" r="2.2" fill="#8be0ee"/><circle cx="-71" cy="-10.5" r="1.1" fill="#8be0ee"/><circle cx="-78" cy="-3" r="1.1" fill="#8be0ee"/><circle cx="75" cy="7" r="2.2" fill="#8be0ee"/><circle cx="71" cy="10.5" r="1.1" fill="#8be0ee"/><circle cx="78" cy="3" r="1.1" fill="#8be0ee"/></g><g transform="translate(891 420) rotate(90)"><rect x="-86" y="-16.2" width="172" height="32.4" rx="12" fill="#744f7c" stroke="#0aa3c2" stroke-width="1"/><rect x="-83" y="-13.3" width="166" height="26.6" rx="9.5" fill="#877a96"/><rect x="-79.5" y="-9.8" width="159" height="19.6" rx="6.5" fill="#8f88a3"/><rect x="-80" y="-3.5" width="160" height="7" fill="#806689"/><circle cx="-61" cy="0" r="4" fill="#877a96" stroke="#6a4d75" stroke-width="2.3"/><circle cx="-60" cy="-0.8" r="1.1" fill="#7fd8e8"/><circle cx="61" cy="0" r="4" fill="#877a96" stroke="#6a4d75" stroke-width="2.3"/><circle cx="62" cy="-0.8" r="1.1" fill="#7fd8e8"/><circle cx="-75" cy="-7" r="2.2" fill="#8be0ee"/><circle cx="-71" cy="-10.5" r="1.1" fill="#8be0ee"/><circle cx="-78" cy="-3" r="1.1" fill="#8be0ee"/><circle cx="75" cy="7" r="2.2" fill="#8be0ee"/><circle cx="71" cy="10.5" r="1.1" fill="#8be0ee"/><circle cx="78" cy="3" r="1.1" fill="#8be0ee"/></g><g transform="translate(553 547.5) rotate(0)"><rect x="-86" y="-16.2" width="172" height="32.4" rx="12" fill="#744f7c" stroke="#0aa3c2" stroke-width="1"/><rect x="-83" y="-13.3" width="166" height="26.6" rx="9.5" fill="#877a96"/><rect x="-79.5" y="-9.8" width="159" height="19.6" rx="6.5" fill="#8f88a3"/><rect x="-80" y="-3.5" width="160" height="7" fill="#806689"/><circle cx="-61" cy="0" r="4" fill="#877a96" stroke="#6a4d75" stroke-width="2.3"/><circle cx="-60" cy="-0.8" r="1.1" fill="#7fd8e8"/><circle cx="61" cy="0" r="4" fill="#877a96" stroke="#6a4d75" stroke-width="2.3"/><circle cx="62" cy="-0.8" r="1.1" fill="#7fd8e8"/><circle cx="-75" cy="-7" r="2.2" fill="#8be0ee"/><circle cx="-71" cy="-10.5" r="1.1" fill="#8be0ee"/><circle cx="-78" cy="-3" r="1.1" fill="#8be0ee"/><circle cx="75" cy="7" r="2.2" fill="#8be0ee"/><circle cx="71" cy="10.5" r="1.1" fill="#8be0ee"/><circle cx="78" cy="3" r="1.1" fill="#8be0ee"/></g><g transform="translate(724 547.5) rotate(0)"><rect x="-86" y="-16.2" width="172" height="32.4" rx="12" fill="#744f7c" stroke="#0aa3c2" stroke-width="1"/><rect x="-83" y="-13.3" width="166" height="26.6" rx="9.5" fill="#877a96"/><rect x="-79.5" y="-9.8" width="159" height="19.6" rx="6.5" fill="#8f88a3"/><rect x="-80" y="-3.5" width="160" height="7" fill="#806689"/><circle cx="-61" cy="0" r="4" fill="#877a96" stroke="#6a4d75" stroke-width="2.3"/><circle cx="-60" cy="-0.8" r="1.1" fill="#7fd8e8"/><circle cx="61" cy="0" r="4" fill="#877a96" stroke="#6a4d75" stroke-width="2.3"/><circle cx="62" cy="-0.8" r="1.1" fill="#7fd8e8"/><circle cx="-75" cy="-7" r="2.2" fill="#8be0ee"/><circle cx="-71" cy="-10.5" r="1.1" fill="#8be0ee"/><circle cx="-78" cy="-3" r="1.1" fill="#8be0ee"/><circle cx="75" cy="7" r="2.2" fill="#8be0ee"/><circle cx="71" cy="10.5" r="1.1" fill="#8be0ee"/><circle cx="78" cy="3" r="1.1" fill="#8be0ee"/></g><g transform="translate(588.6 352.8) rotate(121.3)"><rect x="-82" y="-16.2" width="164" height="32.4" rx="12" fill="#744f7c" stroke="#0aa3c2" stroke-width="1"/><rect x="-79" y="-13.3" width="158" height="26.6" rx="9.5" fill="#877a96"/><rect x="-75.5" y="-9.8" width="151" height="19.6" rx="6.5" fill="#8f88a3"/><rect x="-76" y="-3.5" width="152" height="7" fill="#806689"/><circle cx="-65" cy="0" r="4" fill="#877a96" stroke="#6a4d75" stroke-width="2.3"/><circle cx="-64" cy="-0.8" r="1.1" fill="#7fd8e8"/><circle cx="57" cy="0" r="4" fill="#877a96" stroke="#6a4d75" stroke-width="2.3"/><circle cx="58" cy="-0.8" r="1.1" fill="#7fd8e8"/><circle cx="-71" cy="-7" r="2.2" fill="#8be0ee"/><circle cx="-67" cy="-10.5" r="1.1" fill="#8be0ee"/><circle cx="-74" cy="-3" r="1.1" fill="#8be0ee"/><circle cx="71" cy="7" r="2.2" fill="#8be0ee"/><circle cx="67" cy="10.5" r="1.1" fill="#8be0ee"/><circle cx="74" cy="3" r="1.1" fill="#8be0ee"/></g><g transform="translate(660.2 352.5) rotate(61.5)"><rect x="-86" y="-16.2" width="172" height="32.4" rx="12" fill="#744f7c" stroke="#0aa3c2" stroke-width="1"/><rect x="-83" y="-13.3" width="166" height="26.6" rx="9.5" fill="#877a96"/><rect x="-79.5" y="-9.8" width="159" height="19.6" rx="6.5" fill="#8f88a3"/><rect x="-80" y="-3.5" width="160" height="7" fill="#806689"/><circle cx="-62" cy="0" r="4" fill="#877a96" stroke="#6a4d75" stroke-width="2.3"/><circle cx="-61" cy="-0.8" r="1.1" fill="#7fd8e8"/><circle cx="60" cy="0" r="4" fill="#877a96" stroke="#6a4d75" stroke-width="2.3"/><circle cx="61" cy="-0.8" r="1.1" fill="#7fd8e8"/><circle cx="-75" cy="-7" r="2.2" fill="#8be0ee"/><circle cx="-71" cy="-10.5" r="1.1" fill="#8be0ee"/><circle cx="-78" cy="-3" r="1.1" fill="#8be0ee"/><circle cx="75" cy="7" r="2.2" fill="#8be0ee"/><circle cx="71" cy="10.5" r="1.1" fill="#8be0ee"/><circle cx="78" cy="3" r="1.1" fill="#8be0ee"/></g><g transform="translate(415 503.5) rotate(17.9)"><path d="M-1.3 -7H1.3V-2.5H-1.3Z M-1.3 7H1.3V2.5H-1.3Z M-7 -1.3V1.3H-2.5V-1.3Z M7 -1.3V1.3H2.5V-1.3Z" fill="#c9c5cd" stroke="#3a3a3a" stroke-width="0.8"/><circle r="3.3" fill="#c9c5cd" stroke="#3a3a3a" stroke-width="0.7"/></g><g transform="translate(825.4 505.2) rotate(-15.6)"><path d="M-1.3 -7H1.3V-2.5H-1.3Z M-1.3 7H1.3V2.5H-1.3Z M-7 -1.3V1.3H-2.5V-1.3Z M7 -1.3V1.3H2.5V-1.3Z" fill="#c9c5cd" stroke="#3a3a3a" stroke-width="0.8"/><circle r="3.3" fill="#c9c5cd" stroke="#3a3a3a" stroke-width="0.7"/></g><g transform="translate(348.5 417) rotate(0)"><path d="M-1.3 -7H1.3V-2.5H-1.3Z M-1.3 7H1.3V2.5H-1.3Z M-7 -1.3V1.3H-2.5V-1.3Z M7 -1.3V1.3H2.5V-1.3Z" fill="#c9c5cd" stroke="#3a3a3a" stroke-width="0.8"/><circle r="3.3" fill="#c9c5cd" stroke="#3a3a3a" stroke-width="0.7"/></g><g transform="translate(891 420) rotate(0)"><path d="M-1.3 -7H1.3V-2.5H-1.3Z M-1.3 7H1.3V2.5H-1.3Z M-7 -1.3V1.3H-2.5V-1.3Z M7 -1.3V1.3H2.5V-1.3Z" fill="#c9c5cd" stroke="#3a3a3a" stroke-width="0.8"/><circle r="3.3" fill="#c9c5cd" stroke="#3a3a3a" stroke-width="0.7"/></g><g transform="translate(554 547.5) rotate(0)"><path d="M-1.3 -7H1.3V-2.5H-1.3Z M-1.3 7H1.3V2.5H-1.3Z M-7 -1.3V1.3H-2.5V-1.3Z M7 -1.3V1.3H2.5V-1.3Z" fill="#c9c5cd" stroke="#3a3a3a" stroke-width="0.8"/><circle r="3.3" fill="#c9c5cd" stroke="#3a3a3a" stroke-width="0.7"/></g><g transform="translate(724 547.5) rotate(0)"><path d="M-1.3 -7H1.3V-2.5H-1.3Z M-1.3 7H1.3V2.5H-1.3Z M-7 -1.3V1.3H-2.5V-1.3Z M7 -1.3V1.3H2.5V-1.3Z" fill="#c9c5cd" stroke="#3a3a3a" stroke-width="0.8"/><circle r="3.3" fill="#c9c5cd" stroke="#3a3a3a" stroke-width="0.7"/></g><g transform="translate(591 349) rotate(30)"><path d="M-1.3 -7H1.3V-2.5H-1.3Z M-1.3 7H1.3V2.5H-1.3Z M-7 -1.3V1.3H-2.5V-1.3Z M7 -1.3V1.3H2.5V-1.3Z" fill="#c9c5cd" stroke="#3a3a3a" stroke-width="0.8"/><circle r="3.3" fill="#c9c5cd" stroke="#3a3a3a" stroke-width="0.7"/></g><g transform="translate(660 351.5) rotate(-30)"><path d="M-1.3 -7H1.3V-2.5H-1.3Z M-1.3 7H1.3V2.5H-1.3Z M-7 -1.3V1.3H-2.5V-1.3Z M7 -1.3V1.3H2.5V-1.3Z" fill="#c9c5cd" stroke="#3a3a3a" stroke-width="0.8"/><circle r="3.3" fill="#c9c5cd" stroke="#3a3a3a" stroke-width="0.7"/></g><circle cx="397" cy="334.5" r="20" fill="#5ec4e0" stroke="#2aa7cb" stroke-width="2.4"/><circle cx="392" cy="328.5" r="9" fill="#68c9e2" opacity="0.7"/><g transform="translate(397 334.5) rotate(0)"><path d="M-1.3 -7H1.3V-2.5H-1.3Z M-1.3 7H1.3V2.5H-1.3Z M-7 -1.3V1.3H-2.5V-1.3Z M7 -1.3V1.3H2.5V-1.3Z" fill="#9fc0c8" stroke="#5b8fa0" stroke-width="0.8"/><circle r="3.3" fill="#9fc0c8" stroke="#5b8fa0" stroke-width="0.7"/></g><circle cx="486" cy="373" r="20" fill="#5ec4e0" stroke="#2aa7cb" stroke-width="2.4"/><circle cx="481" cy="367" r="9" fill="#68c9e2" opacity="0.7"/><g transform="translate(486 373) rotate(0)"><path d="M-1.3 -7H1.3V-2.5H-1.3Z M-1.3 7H1.3V2.5H-1.3Z M-7 -1.3V1.3H-2.5V-1.3Z M7 -1.3V1.3H2.5V-1.3Z" fill="#9fc0c8" stroke="#5b8fa0" stroke-width="0.8"/><circle r="3.3" fill="#9fc0c8" stroke="#5b8fa0" stroke-width="0.7"/></g><circle cx="535" cy="319" r="20" fill="#5ec4e0" stroke="#2aa7cb" stroke-width="2.4"/><circle cx="530" cy="313" r="9" fill="#68c9e2" opacity="0.7"/><g transform="translate(535 319) rotate(0)"><path d="M-1.3 -7H1.3V-2.5H-1.3Z M-1.3 7H1.3V2.5H-1.3Z M-7 -1.3V1.3H-2.5V-1.3Z M7 -1.3V1.3H2.5V-1.3Z" fill="#9fc0c8" stroke="#5b8fa0" stroke-width="0.8"/><circle r="3.3" fill="#9fc0c8" stroke="#5b8fa0" stroke-width="0.7"/></g><circle cx="743" cy="389" r="20" fill="#5ec4e0" stroke="#2aa7cb" stroke-width="2.4"/><circle cx="738" cy="383" r="9" fill="#68c9e2" opacity="0.7"/><g transform="translate(743 389) rotate(0)"><path d="M-1.3 -7H1.3V-2.5H-1.3Z M-1.3 7H1.3V2.5H-1.3Z M-7 -1.3V1.3H-2.5V-1.3Z M7 -1.3V1.3H2.5V-1.3Z" fill="#9fc0c8" stroke="#5b8fa0" stroke-width="0.8"/><circle r="3.3" fill="#9fc0c8" stroke="#5b8fa0" stroke-width="0.7"/></g><circle cx="790" cy="254.3" r="20" fill="#5ec4e0" stroke="#2aa7cb" stroke-width="2.4"/><circle cx="785" cy="248.3" r="9" fill="#68c9e2" opacity="0.7"/><g transform="translate(790 254.3) rotate(0)"><path d="M-1.3 -7H1.3V-2.5H-1.3Z M-1.3 7H1.3V2.5H-1.3Z M-7 -1.3V1.3H-2.5V-1.3Z M7 -1.3V1.3H2.5V-1.3Z" fill="#9fc0c8" stroke="#5b8fa0" stroke-width="0.8"/><circle r="3.3" fill="#9fc0c8" stroke="#5b8fa0" stroke-width="0.7"/></g><circle cx="697" cy="309.3" r="20" fill="#5ec4e0" stroke="#2aa7cb" stroke-width="2.4"/><circle cx="692" cy="303.3" r="9" fill="#68c9e2" opacity="0.7"/><g transform="translate(697 309.3) rotate(0)"><path d="M-1.3 -7H1.3V-2.5H-1.3Z M-1.3 7H1.3V2.5H-1.3Z M-7 -1.3V1.3H-2.5V-1.3Z M7 -1.3V1.3H2.5V-1.3Z" fill="#f86a5a" stroke="#e8f4f8" stroke-width="0.8"/><circle r="3.3" fill="#f86a5a" stroke="#e8f4f8" stroke-width="0.7"/></g><rect x="993" y="132" width="5" height="486" rx="2.5" fill="#5a5a5a"/><rect x="993" y="258" width="5" height="192" rx="2.5" fill="#8c8c8c"/><rect x="305" y="627" width="681" height="5" rx="2.5" fill="#5a5a5a"/><rect x="520" y="627" width="239" height="5" rx="2.5" fill="#8c8c8c"/></svg>
<svg style="left:312px;top:139px" width="15" height="15" viewBox="0 0 15 15"><g fill="none" stroke="#e6e6e6" stroke-width="1.5"><path d="M4.5 0.5L7.5 3.5L10.5 0.5"/><path d="M4.5 14.5L7.5 11.5L10.5 14.5"/><path d="M0.5 4.5L3.5 7.5L0.5 10.5"/><path d="M14.5 4.5L11.5 7.5L14.5 10.5"/></g><rect x="5.5" y="5.5" width="4" height="4" fill="#e6e6e6"/></svg>
<svg style="left:344px;top:138px" width="15" height="15" viewBox="0 0 15 15"><circle cx="7.5" cy="7.5" r="7.3" fill="#e6e6e6"/><rect x="3.5" y="6.4" width="8" height="2.3" fill="#202020"/></svg>
<div class="t" style="left:372px;top:139px;color:#e6e6e6">56.1 %</div>
<svg style="left:428px;top:138px" width="15" height="15" viewBox="0 0 15 15"><circle cx="7.5" cy="7.5" r="7.3" fill="#e6e6e6"/><rect x="3.5" y="6.4" width="8" height="2.3" fill="#202020"/><rect x="6.35" y="3.5" width="2.3" height="8" fill="#202020"/></svg>
<div class="a" style="left:296px;top:660px;width:8px;height:8px;border-radius:50%;background:#f5d34f"></div>
<div class="t" style="left:308px;top:657px">Output</div>
<div class="t" style="left:371px;top:657px">Debugger</div>
<div class="t" style="left:454px;top:657px">Audio</div>
<div class="t" style="left:509px;top:657px">Animation</div>
<div class="t" style="left:593px;top:657px">Shader Editor</div>
<svg style="left:893px;top:656px" width="14" height="15" viewBox="0 0 14 15"><g transform="rotate(-25 7 7.5)" fill="#50555f"><path d="M1.5 11.5Q3 10 3 6.5Q3 2 7 2Q11 2 11 6.5Q11 10 12.5 11.5Z"/><circle cx="7" cy="12.8" r="1.8"/></g></svg>
<div class="t" style="right:295px;top:655px;color:#b4b7bb">4.2.1.stable</div>
<div class="t" style="left:1021px;top:54px">Inspector</div>
<div class="t dim" style="left:1106px;top:54px">Node</div>
<div class="t dim" style="left:1164px;top:54px">History</div>
<svg style="left:1269px;top:53px" width="5" height="16" viewBox="0 0 5 16"><circle cx="2.5" cy="2.5" r="2.3" fill="#80848a"/><circle cx="2.5" cy="8" r="2.3" fill="#80848a"/><circle cx="2.5" cy="13.5" r="2.3" fill="#80848a"/></svg>
<svg style="left:1022px;top:87px" width="14" height="15" viewBox="0 0 14 15"><path d="M0 0H8L11 3V8H8V14H0Z" fill="#e0e0e0"/><path d="M8 0V3H11" fill="#363d4a"/><path d="M10 8V14M7 11H13" stroke="#5fe06a" stroke-width="2.2"/></svg>
<svg style="left:1053px;top:88px" width="15" height="13" viewBox="0 0 15 13"><path d="M0.7 12V1.5Q0.7 0.7 1.5 0.7H5L6.5 2.5H11V4" fill="none" stroke="#e0e0e0" stroke-width="1.3"/><path d="M3 5H14.5L12.5 12.3H1Z" fill="#e0e0e0"/></svg>
<svg style="left:1085px;top:87px" width="14" height="14" viewBox="0 0 14 14"><path d="M0 1.5Q0 0 1.5 0H10.5L14 3.5V12.5Q14 14 12.5 14H1.5Q0 14 0 12.5Z M3.5 0V4.5H9V0Z M7 8.3A1.5 1.5 0 1 0 7.01 8.3Z" fill="#80848a" fill-rule="evenodd"/><circle cx="7" cy="9.5" r="1.6" fill="#363d4a"/></svg>
<svg style="left:1121px;top:86px" width="5" height="16" viewBox="0 0 5 16"><circle cx="2.5" cy="2.5" r="2.3" fill="#e0e0e0"/><circle cx="2.5" cy="8" r="2.3" fill="#e0e0e0"/><circle cx="2.5" cy="13.5" r="2.3" fill="#e0e0e0"/></svg>
<svg style="left:1206px;top:87px" width="8" height="15" viewBox="0 0 8 15"><path d="M7 1L1.5 7.5L7 14" fill="none" stroke="#e0e0e0" stroke-width="1.8"/></svg>
<svg style="left:1230px;top:87px" width="8" height="15" viewBox="0 0 8 15"><path d="M1 1L6.5 7.5L1 14" fill="none" stroke="#80848a" stroke-width="1.8"/></svg>
<svg style="left:1255px;top:87px" width="15" height="14" viewBox="0 0 15 14"><path d="M3.5 8A5.5 5.5 0 1 1 6 12.5" fill="none" stroke="#e0e0e0" stroke-width="1.8"/><path d="M0.5 6.5L3.5 10L6.5 6.5Z" fill="#e0e0e0"/><path d="M9 3.5V7.5H12" fill="none" stroke="#e0e0e0" stroke-width="1.6"/></svg>
<div class="a" style="left:1014px;top:111px;width:230px;height:30px;background:#21262e;border-radius:3px"></div>
<svg style="left:1019px;top:119px" width="14" height="14" viewBox="0 0 14 14"><circle cx="7" cy="7" r="7" fill="#8da5f3"/><path d="M5.8 6.8Q6.3 2 9.6 2Q12.6 2.2 13.3 6.8Z M2.2 9.2H5.8L8.6 12.9H4.2Z M0.9 4.4Q2.6 4.2 3 5.2V7H0.8Z" fill="#21262e"/></svg>
<div class="t" style="left:1042px;top:119px">Ball4</div>
<svg style="left:1226px;top:122px" width="11" height="8" viewBox="0 0 11 8"><path d="M1 1.5L5.5 6L10 1.5" fill="none" stroke="#e0e0e0" stroke-width="2"/></svg>
<svg style="left:1253px;top:117px" width="17" height="17" viewBox="0 0 17 17"><circle cx="9.5" cy="4.5" r="3.5" fill="none" stroke="#e0e0e0" stroke-width="1.6"/><path d="M7.3 7.2L5 9.5" stroke="#e0e0e0" stroke-width="1.8"/><text x="8.5" y="16.5" font-family="Liberation Sans" font-weight="bold" font-size="6.5" fill="#e0e0e0" text-anchor="middle">DOC</text></svg>
<div class="a" style="left:1014px;top:145px;width:230px;height:29px;background:#21262e;border-bottom:2px solid #1a1e24;border-radius:3px 3px 0 0"></div>
<div class="t dim" style="left:1020px;top:152px">Filter Properties</div>
<svg style="left:1222px;top:151px" width="14" height="14" viewBox="0 0 14 14"><circle cx="5.5" cy="5.5" r="4.2" fill="none" stroke="#e0e0e0" stroke-width="2"/><path d="M8.5 8.5L13 13" stroke="#e0e0e0" stroke-width="2.2" stroke-linecap="round"/></svg>
<svg style="left:1255px;top:151px" width="14" height="15" viewBox="0 0 14 15"><path d="M3 0V6M1 4.5Q1 8 3 8Q5 8 5 4.5" fill="none" stroke="#e0e0e0" stroke-width="1.6"/><path d="M3 8V14" stroke="#e0e0e0" stroke-width="2.5" stroke-linecap="round"/><path d="M11 0V15" stroke="#e0e0e0" stroke-width="1.6"/><rect x="8.5" y="5" width="5" height="3.5" fill="#e0e0e0"/></svg>
<div class="a" style="left:1014px;top:178px;width:262px;height:501px;background:#21262e;border-radius:3px"></div>
<div class="a" style="left:1018px;top:182px;width:242px;height:24px;background:#40444c;border-radius:3px"></div><svg style="left:1084px;top:187px" width="14" height="14" viewBox="0 0 14 14"><circle cx="7" cy="7" r="7" fill="#8da5f3"/><path d="M5.8 6.8Q6.3 2 9.6 2Q12.6 2.2 13.3 6.8Z M2.2 9.2H5.8L8.6 12.9H4.2Z M0.9 4.4Q2.6 4.2 3 5.2V7H0.8Z" fill="#21262e"/></svg><div class="t b" style="left:1105px;top:186px;color:#d6d8db">RigidBody2D</div>
<div class="t" style="left:1026px;top:212px;color:#a9acb1">Mass</div>
<div class="a" style="left:1139px;top:206px;width:120px;height:29px;background:#1c2027;border-radius:2px"></div>
<div class="t" style="left:1156px;top:212px;color:#c8cacd">1</div>
<div class="t" style="left:1169px;top:212px;color:#6f737a">kg</div>
<div class="a" style="left:1145px;top:229px;width:105px;height:2px;background:#3d4249"></div>
<div class="a" style="left:1145px;top:229px;width:44px;height:2px;background:#8a8d92"></div>
<div class="a" style="left:1187px;top:228px;width:4px;height:4px;background:#c8c8c8"></div>
<div class="t" style="left:1026px;top:246px;color:#a9acb1">Physics Materi...</div>
<svg style="left:1146px;top:247px" width="14" height="14" viewBox="0 0 14 14"><path d="M7 0L13.5 3.3V10.7L7 14L0.5 10.7V3.3Z" fill="#e0e0e0"/><path d="M0.5 3.3L7 6.6L13.5 3.3M7 6.6V14" fill="none" stroke="#21262e" stroke-width="1"/><path d="M7 6.6L13.5 3.3V10.7L7 14Z" fill="#21262e" opacity=".35"/></svg>
<div class="t" style="left:1165px;top:247px;color:#cdcfd2">PhysicsM</div>
<svg style="left:1243px;top:252px" width="9" height="6" viewBox="0 0 9 6"><path d="M1 1L4.5 4.5L8 1" fill="none" stroke="#e0e0e0" stroke-width="1.8"/></svg>
<div class="t" style="left:1026px;top:279px;color:#a9acb1">Gravity Scale</div>
<div class="a" style="left:1139px;top:273px;width:120px;height:28px;background:#1c2027;border-radius:2px"></div>
<div class="t" style="left:1155px;top:279px;color:#c8cacd">4</div>
<div class="a" style="left:1145px;top:296px;width:105px;height:2px;background:#3d4249"></div>
<div class="a" style="left:1145px;top:296px;width:80px;height:2px;background:#8a8d92"></div>
<div class="a" style="left:1223px;top:295px;width:4px;height:4px;background:#c8c8c8"></div>
<div class="a" style="left:1018px;top:302px;width:242px;height:144px;background:#262b34"></div><svg style="left:1024px;top:310px" width="6" height="9" viewBox="0 0 6 9"><path d="M1 1L4.5 4.5L1 8" fill="none" stroke="#8c8f94" stroke-width="1.6"/></svg><div class="t b" style="left:1032px;top:306px;color:#d6d8db">Mass Distribution</div><svg style="left:1024px;top:334px" width="6" height="9" viewBox="0 0 6 9"><path d="M1 1L4.5 4.5L1 8" fill="none" stroke="#8c8f94" stroke-width="1.6"/></svg><div class="t b" style="left:1032px;top:330px;color:#d6d8db">Deactivation</div><svg style="left:1024px;top:358px" width="6" height="9" viewBox="0 0 6 9"><path d="M1 1L4.5 4.5L1 8" fill="none" stroke="#8c8f94" stroke-width="1.6"/></svg><div class="t b" style="left:1032px;top:354px;color:#d6d8db">Solver</div><svg style="left:1024px;top:382px" width="6" height="9" viewBox="0 0 6 9"><path d="M1 1L4.5 4.5L1 8" fill="none" stroke="#8c8f94" stroke-width="1.6"/></svg><div class="t b" style="left:1032px;top:378px;color:#d6d8db">Linear</div><svg style="left:1024px;top:406px" width="6" height="9" viewBox="0 0 6 9"><path d="M1 1L4.5 4.5L1 8" fill="none" stroke="#8c8f94" stroke-width="1.6"/></svg><div class="t b" style="left:1032px;top:402px;color:#d6d8db">Angular</div><svg style="left:1024px;top:430px" width="6" height="9" viewBox="0 0 6 9"><path d="M1 1L4.5 4.5L1 8" fill="none" stroke="#8c8f94" stroke-width="1.6"/></svg><div class="t b" style="left:1032px;top:426px;color:#d6d8db">Constant Forces</div>
<div class="a" style="left:1018px;top:446px;width:242px;height:24px;background:#40444c;border-radius:3px"></div><svg style="left:1068px;top:453px" width="12" height="12" viewBox="0 0 12 12"><circle cx="6" cy="6" r="4.8" fill="none" stroke="#a5a8ad" stroke-width="1.8"/></svg><div class="t b" style="left:1088px;top:450px;color:#d6d8db">CollisionObject2D</div>
<div class="t" style="left:1026px;top:477px;color:#a9acb1">Disable Mode</div>
<div class="a" style="left:1139px;top:470px;width:121px;height:30px;background:#1c2027"></div>
<div class="t" style="left:1145px;top:478px;color:#cdcfd2">Remove</div>
<svg style="left:1244px;top:481px" width="11" height="8" viewBox="0 0 11 8"><path d="M1 1.5L5.5 6L10 1.5" fill="none" stroke="#e0e0e0" stroke-width="2"/></svg>
<div class="a" style="left:1018px;top:500px;width:242px;height:48px;background:#262b34"></div><svg style="left:1024px;top:508px" width="6" height="9" viewBox="0 0 6 9"><path d="M1 1L4.5 4.5L1 8" fill="none" stroke="#8c8f94" stroke-width="1.6"/></svg><div class="t b" style="left:1032px;top:504px;color:#d6d8db">Collision</div><svg style="left:1024px;top:532px" width="6" height="9" viewBox="0 0 6 9"><path d="M1 1L4.5 4.5L1 8" fill="none" stroke="#8c8f94" stroke-width="1.6"/></svg><div class="t b" style="left:1032px;top:528px;color:#d6d8db">Input</div>
<div class="a" style="left:1018px;top:548px;width:242px;height:24px;background:#40444c;border-radius:3px"></div><svg style="left:1102px;top:554px" width="12" height="12" viewBox="0 0 12 12"><circle cx="6" cy="6" r="4.8" fill="none" stroke="#8da5f3" stroke-width="1.8"/></svg><div class="t b" style="left:1122px;top:552px;color:#d6d8db">Node2D</div>
<div class="a" style="left:1018px;top:572px;width:242px;height:24px;background:#262b34"></div><svg style="left:1024px;top:580px" width="6" height="9" viewBox="0 0 6 9"><path d="M1 1L4.5 4.5L1 8" fill="none" stroke="#8c8f94" stroke-width="1.6"/></svg><div class="t b" style="left:1032px;top:576px;color:#d6d8db">Transform</div>
<div class="t" style="left:1189px;top:576px;color:#80848a">(1 change)</div>
<div class="a" style="left:1018px;top:596px;width:242px;height:24px;background:#40444c;border-radius:3px"></div><svg style="left:1087px;top:601px" width="15" height="15" viewBox="0 0 15 15"><path d="M6 9L13 2" stroke="#80848a" stroke-width="3" stroke-linecap="round"/><path d="M1 14Q1 10 4 10Q6 11 5 13Q3.5 14.5 1 14Z" fill="#80848a"/></svg><div class="t b" style="left:1108px;top:600px;color:#d6d8db">CanvasItem</div>
<div class="a" style="left:1014px;top:620px;width:262px;height:59px;overflow:hidden"><div class="a" style="left:4px;top:0px;width:242px;height:72px;background:#262b34"></div><svg style="left:10px;top:8px" width="6" height="9" viewBox="0 0 6 9"><path d="M1 1L4.5 4.5L1 8" fill="none" stroke="#8c8f94" stroke-width="1.6"/></svg><div class="t b" style="left:18px;top:4px;color:#d6d8db">Visibility</div><svg style="left:10px;top:32px" width="6" height="9" viewBox="0 0 6 9"><path d="M1 1L4.5 4.5L1 8" fill="none" stroke="#8c8f94" stroke-width="1.6"/></svg><div class="t b" style="left:18px;top:28px;color:#d6d8db">Ordering</div><svg style="left:10px;top:56px" width="6" height="9" viewBox="0 0 6 9"><path d="M1 1L4.5 4.5L1 8" fill="none" stroke="#8c8f94" stroke-width="1.6"/></svg><div class="t b" style="left:18px;top:52px;color:#d6d8db">Texture</div></div>
<div class="a" style="left:1268px;top:182px;width:5px;height:492px;background:#2a2f37;border-radius:3px"></div>
<div class="a" style="left:1268px;top:182px;width:5px;height:366px;background:#6b7078;border-radius:3px"></div>
</body></html>
